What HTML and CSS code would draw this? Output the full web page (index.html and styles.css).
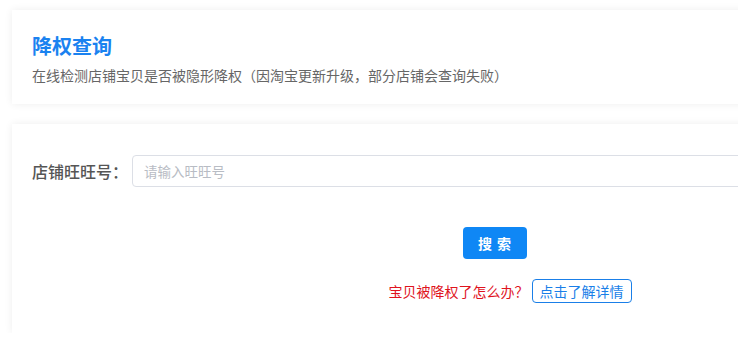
FILE: index.html
```html
<!DOCTYPE html>
<html lang="zh-CN">
<head>
<meta charset="utf-8">
<title>降权查询</title>
<link rel="stylesheet" href="styles.css">
</head>
<body>
<div class="page">
  <section class="card head-card">
    <h1 class="title">降权查询</h1>
    <p class="subtitle">在线检测店铺宝贝是否被隐形降权（因淘宝更新升级，部分店铺会查询失败）</p>
  </section>
  <section class="card form-card">
    <div class="field">
      <label class="label">店铺旺旺号：</label>
      <input class="input" type="text" placeholder="请输入旺旺号">
    </div>
    <div class="actions">
      <button class="btn-primary">搜 索</button>
    </div>
    <div class="help">
      <span class="help-q">宝贝被降权了怎么办？</span>
      <a class="btn-outline">点击了解详情</a>
    </div>
  </section>
</div>
</body>
</html>
```
FILE: styles.css
```css
html, body {
  margin: 0;
  padding: 0;
  background: #ffffff;
  overflow: hidden;
}
body {
  font-family: "Noto Sans CJK SC", "Noto Sans", sans-serif;
  color: #333;
}
.page {
  width: 966px;
  padding: 10px 0 0 12px;
  display: flex;
  flex-direction: column;
  gap: 20px;
}
.card {
  background: #fff;
  box-shadow: 0 0 8px rgba(0, 0, 0, 0.07);
}
.head-card {
  padding: 22px 20px 19px;
}
.title {
  margin: 0;
  font-size: 20px;
  line-height: 28px;
  font-weight: 700;
  color: #1a82f0;
}
.subtitle {
  margin: 5px 0 0;
  font-size: 14px;
  line-height: 20px;
  color: #666;
}
.form-card {
  padding: 31px 20px 30px;
}
.field {
  display: flex;
  align-items: center;
}
.label {
  width: 100px;
  font-size: 16px;
  color: #555;
  font-weight: 500;
}
.input {
  flex: 1;
  height: 32px;
  box-sizing: border-box;
  border: 1px solid #dcdfe6;
  border-radius: 4px;
  padding: 0 11px;
  font-family: inherit;
  font-size: 13.5px;
  outline: none;
}
.input::placeholder {
  color: #b8bcc4;
}
.actions {
  display: flex;
  justify-content: center;
  margin-top: 40px;
}
.btn-primary {
  width: 64px;
  height: 32px;
  border: none;
  border-radius: 4px;
  background: #0f87f5;
  color: #fff;
  font-family: inherit;
  font-size: 14px;
  font-weight: 700;
  letter-spacing: 1px;
}
.help {
  display: flex;
  justify-content: center;
  align-items: center;
  gap: 3px;
  margin-top: 20px;
  padding-left: 30px;
}
.help-q {
  color: #e0141e;
  font-size: 14px;
}
.btn-outline {
  height: 24px;
  box-sizing: border-box;
  padding: 0 7px;
  border: 1px solid #1a7fe8;
  border-radius: 4px;
  color: #1a7fe8;
  font-size: 14px;
  line-height: 22px;
}
```
